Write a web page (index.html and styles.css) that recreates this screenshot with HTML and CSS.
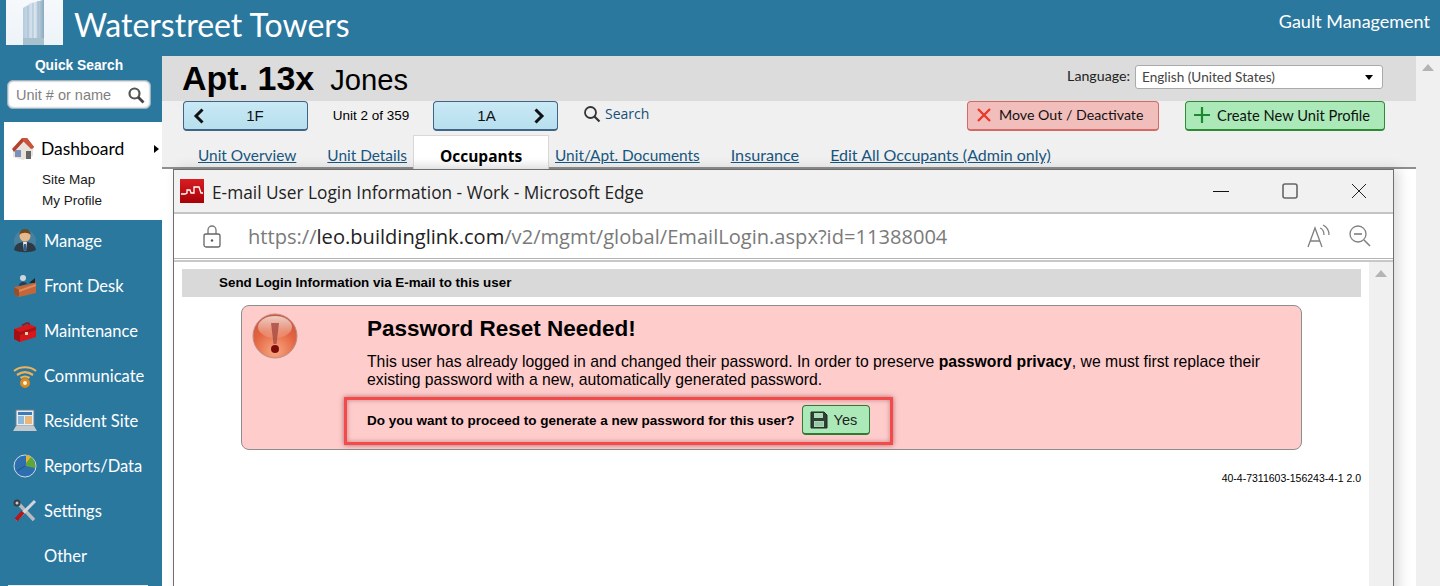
FILE: index.html
```html
<!DOCTYPE html>
<html lang="en">
<head>
<meta charset="utf-8">
<title>Waterstreet Towers</title>
<link rel="stylesheet" href="styles.css">
</head>
<body>
<div class="page">
  <header class="topbar">
    <svg class="logo" width="57" height="45" viewBox="0 0 57 45">
      <defs>
        <linearGradient id="sky" x1="0" y1="0" x2="0" y2="1"><stop offset="0" stop-color="#f6f9fc"/><stop offset="1" stop-color="#edf3f8"/></linearGradient>
        <linearGradient id="tower" x1="0" y1="0" x2="1" y2="0"><stop offset="0" stop-color="#b5cbdc"/><stop offset=".55" stop-color="#dbe7f0"/><stop offset="1" stop-color="#8aa8bf"/></linearGradient>
      </defs>
      <rect width="57" height="45" fill="url(#sky)"/>
      <path d="M17 45V8L25 3 37 0 38 0V45Z" fill="url(#tower)"/>
      <path d="M22 45V6M27 45V3M32 45V1" stroke="#9db5c8" stroke-width=".8"/>
      <rect x="17" y="38" width="21" height="7" fill="#a9c0cd"/>
    </svg>
    <h1 class="site-name">Waterstreet Towers</h1>
    <div class="company">Gault Management</div>
  </header>
  <div class="body-row">
    <nav class="sidebar">
      <div class="qs-label">Quick Search</div>
      <div class="qs-box">
        <span class="qs-placeholder">Unit # or name</span>
        <svg width="18" height="18" viewBox="0 0 18 18"><circle cx="7.500" cy="7.500" r="5" fill="none" stroke="#555" stroke-width="2.200"/><path d="M11 11l5.500 5.500" stroke="#444" stroke-width="2.800"/></svg>
      </div>
      <div class="active-panel">
        <div class="active-head">
          <svg class="nav-icon" width="24" height="24" viewBox="0 0 24 24"><path d="M2 11v9l10 3 10-4V10L12 2Z" fill="#e8e4dc"/><path d="M1 12L11 1h5l7 9-2 2-8-8L3 15Z" fill="#b5402c"/><path d="M11 1h5l7 9-3 2-8-8Z" fill="#c9543d"/><rect x="15" y="14" width="5" height="8" fill="#666"/><rect x="4" y="13" width="6" height="7" fill="#7d8fbb"/></svg>
          <span class="active-title">Dashboard</span>
          <span class="caret"></span>
        </div>
        <a class="sub-link sub-first">Site Map</a>
        <a class="sub-link">My Profile</a>
      </div>
      <ul class="nav-list">
        <li class="nav-item">
          <svg class="nav-icon" width="24" height="24" viewBox="0 0 24 24"><circle cx="12" cy="12" r="11" fill="#7f8f9b" opacity=".35"/><path d="M1 21c1-6 5-8 11-8s10 2 11 8c-5 3-17 3-22 0Z" fill="#2d3a45"/><path d="M10 13h4l-1 9h-2Z" fill="#e9e9e9"/><path d="M11 15h2l.5 6-1.500 1.500-1.500-1.500Z" fill="#2f5f8f"/><circle cx="12" cy="7" r="5.500" fill="#e7b88c"/><path d="M6.500 6c0-5 3-6 5.500-6s5.500 1 5.500 6c-2-3-9-3-11 0Z" fill="#6b4a22"/></svg>
          <span>Manage</span>
        </li>
        <li class="nav-item">
          <svg class="nav-icon" width="24" height="24" viewBox="0 0 24 24"><path d="M1 13l17-3 5-2v11L6 23 1 20Z" fill="#c0683c"/><path d="M1 13l5 3v7l-5-3Z" fill="#94502e"/><path d="M6 16l17-6v2L6 18Z" fill="#e08d5a"/><circle cx="10" cy="4" r="3" fill="#cfd6dc"/><path d="M6 12c0-5 7-5 8-2Z" fill="#2c3b47"/><path d="M16 9l6-5v5Z" fill="#24282c"/></svg>
          <span>Front Desk</span>
        </li>
        <li class="nav-item">
          <svg class="nav-icon" width="24" height="24" viewBox="0 0 24 24"><path d="M1 10l15-5 7 3v10L7 23l-6-3Z" fill="#d6181d"/><path d="M1 10l6 3v10l-6-3Z" fill="#a01015"/><path d="M7 13l16-5v3L7 16Z" fill="#a91216"/><path d="M8 6l6-3 3 1v2l-3-1-4 2Z" fill="#7c2226"/><rect x="12" y="13" width="3" height="3" fill="#e9d9a0"/></svg>
          <span>Maintenance</span>
        </li>
        <li class="nav-item">
          <svg class="nav-icon" width="24" height="24" viewBox="0 0 24 24" fill="none" stroke="#f0b157" stroke-width="2.200"><path d="M1 7c6-5 16-5 22 0"/><path d="M4 11c5-3.500 11-3.500 16 0"/><path d="M7.500 14c3-2 6-2 9 0"/><circle cx="12" cy="19" r="3.500" fill="#fff3d8" stroke="#d98a24" stroke-width="3"/></svg>
          <span>Communicate</span>
        </li>
        <li class="nav-item">
          <svg class="nav-icon" width="24" height="24" viewBox="0 0 24 24"><rect x="3" y="1" width="18" height="16" fill="#e6eef5" stroke="#6e7c88"/><rect x="5" y="3" width="14" height="3" fill="#3d7cb8"/><rect x="5" y="7" width="6" height="8" fill="#8fb9dc"/><rect x="12" y="7" width="7" height="8" fill="#e9b67b"/><path d="M3 17h18l3 5H0Z" fill="#c4c9cd"/></svg>
          <span>Resident Site</span>
        </li>
        <li class="nav-item">
          <svg class="nav-icon" width="24" height="24" viewBox="0 0 24 24"><circle cx="12" cy="12" r="11" fill="#2d6fae" stroke="#cfdbe6"/><path d="M13 1a11 11 0 0 1 9 13l-9-2Z" fill="#5fa838"/><path d="M13 1a11 11 0 0 1 5 2l-5 6Z" fill="#e8b23a"/><path d="M4 17l8-5" stroke="#1f5183"/></svg>
          <span>Reports/Data</span>
        </li>
        <li class="nav-item">
          <svg class="nav-icon" width="24" height="24" viewBox="0 0 24 24"><path d="M4 3l17 18" stroke="#b8bcc0" stroke-width="3.500"/><path d="M22 2L3 21" stroke="#d4d7da" stroke-width="3"/><path d="M10 13L3 21" stroke="#b3161b" stroke-width="4"/><circle cx="4" cy="4" r="3.500" fill="#3a3d40"/><circle cx="4" cy="4" r="1.500" fill="#c8ccd0"/></svg>
          <span>Settings</span>
        </li>
        <li class="nav-item">
          <span class="nav-blank"></span>
          <span>Other</span>
        </li>
      </ul>
      <div class="side-stub"></div>
    </nav>
    <main class="content">
      <div class="unit-head">
        <div class="unit-title"><span class="apt">Apt. 13x</span><span class="resident">Jones</span></div>
        <div class="lang">
          <span>Language:</span>
          <div class="lang-select"><span>English (United States)</span><i class="lang-arrow"></i></div>
        </div>
      </div>
      <div class="unit-tools">
        <div class="pager">
          <div class="nav-btn nav-prev">
            <svg width="14" height="18" viewBox="0 0 14 18"><path d="M10.500 2.500L4 9l6.500 6.500" fill="none" stroke="#111" stroke-width="3"/></svg>
            <span class="nav-btn-label">1F</span>
          </div>
          <span class="unit-count">Unit 2 of 359</span>
          <div class="nav-btn nav-next">
            <span class="nav-btn-label">1A</span>
            <svg width="14" height="18" viewBox="0 0 14 18"><path d="M3.500 2.500L10 9l-6.500 6.500" fill="none" stroke="#111" stroke-width="3"/></svg>
          </div>
          <a class="search-link">
            <svg width="18" height="18" viewBox="0 0 18 18"><circle cx="7.500" cy="7.500" r="5.500" fill="none" stroke="#333" stroke-width="1.800"/><path d="M11.500 11.500l5 5" stroke="#333" stroke-width="2.200"/></svg>
            <span>Search</span>
          </a>
        </div>
        <div class="actions">
          <div class="act-btn act-red">
            <svg width="16" height="16" viewBox="0 0 16 16"><path d="M2 2l12 12M14 2L2 14" stroke="#e8392a" stroke-width="2.400"/></svg>
            <span>Move Out / Deactivate</span>
          </div>
          <div class="act-btn act-green">
            <svg width="16" height="16" viewBox="0 0 16 16"><path d="M8 0v16M0 8h16" stroke="#1f8a2d" stroke-width="2.200"/></svg>
            <span>Create New Unit Profile</span>
          </div>
        </div>
      </div>
      <div class="tabs">
        <a class="tab tab-1">Unit Overview</a>
        <a class="tab tab-2">Unit Details</a>
        <a class="tab tab-on">Occupants</a>
        <a class="tab tab-3">Unit/Apt. Documents</a>
        <a class="tab tab-4">Insurance</a>
        <a class="tab tab-5">Edit All Occupants (Admin only)</a>
      </div>
    </main>
    <div class="page-scroll"><i class="arrow-up"></i></div>
  </div>
  <section class="popup">
    <div class="win-title">
      <svg class="win-favicon" width="24" height="24" viewBox="0 0 24 24"><defs><linearGradient id="fav" x1="0" y1="0" x2="0" y2="1"><stop offset="0" stop-color="#d81e22"/><stop offset="1" stop-color="#a80008"/></linearGradient></defs><rect width="24" height="24" fill="url(#fav)"/><path d="M1 15h4l2-1v-3h3l1 3h3V8h5l2 6h2" fill="none" stroke="#fff" stroke-width="1.300"/></svg>
      <span class="win-name">E-mail User Login Information - Work - Microsoft Edge</span>
      <div class="win-controls">
        <svg width="16" height="16" viewBox="0 0 16 16"><path d="M0 8.500h16" stroke="#111" stroke-width="1"/></svg>
        <svg width="16" height="16" viewBox="0 0 16 16"><rect x="1" y="1" width="14" height="14" rx="2" fill="none" stroke="#666" stroke-width="1.600"/></svg>
        <svg width="16" height="16" viewBox="0 0 16 16"><path d="M1 1l14 14M15 1L1 15" stroke="#222" stroke-width="1"/></svg>
      </div>
    </div>
    <div class="win-address">
      <svg class="lock" width="18" height="24" viewBox="0 0 18 24"><path d="M5 10V6a4 4 0 0 1 8 0v4" fill="none" stroke="#777" stroke-width="1.300"/><rect x="1" y="10" width="16" height="13" rx="2" fill="none" stroke="#666" stroke-width="1.300"/><circle cx="9" cy="16.500" r="1.200" fill="#555"/></svg>
      <span class="url"><span class="url-dim">https://</span>leo.buildinglink.com<span class="url-dim">/v2/mgmt/global/EmailLogin.aspx?id=11388004</span></span>
      <div class="addr-tools">
        <svg width="24" height="24" viewBox="0 0 24 24" fill="none" stroke="#808080" stroke-width="1.300"><path d="M1 23L8 4l7 19M3.500 17h9"/><path d="M13 4c3 1 4 4 4 7M16 1c4 2 6 6 6 10"/></svg>
        <svg width="22" height="24" viewBox="0 0 22 24" fill="none" stroke="#808080" stroke-width="1.300"><circle cx="9" cy="10" r="8"/><path d="M5 10h8" stroke-width="1.600"/><path d="M15 16l6 6" stroke-width="1.600"/></svg>
      </div>
    </div>
    <div class="win-body">
      <div class="doc">
        <div class="doc-band">Send Login Information via E-mail to this user</div>
        <div class="alert">
          <svg class="alert-icon" width="46" height="46" viewBox="0 0 46 46">
            <defs>
              <radialGradient id="orb" cx=".5" cy=".85" r=".85"><stop offset="0" stop-color="#f7a883"/><stop offset=".6" stop-color="#e4633f"/><stop offset="1" stop-color="#c8583f"/></radialGradient>
              <linearGradient id="gloss" x1="0" y1="0" x2="0" y2="1"><stop offset="0" stop-color="#fff" stop-opacity=".7"/><stop offset="1" stop-color="#fff" stop-opacity=".1"/></linearGradient>
            </defs>
            <circle cx="23" cy="23" r="22" fill="url(#orb)" stroke="#b98f86"/>
            <ellipse cx="23" cy="14" rx="17" ry="11" fill="url(#gloss)"/>
            <path d="M19 10h8l-2.500 21h-3Z" fill="#a64a42" opacity=".8"/>
            <circle cx="23" cy="36" r="4" fill="#7d0c08"/>
          </svg>
          <div class="alert-text">
            <h2 class="alert-title">Password Reset Needed!</h2>
            <p class="alert-msg">This user has already logged in and changed their password. In order to preserve <b>password privacy</b>, we must first replace their existing password with a new, automatically generated password.</p>
            <div class="prompt">
              <span>Do you want to proceed to generate a new password for this user?</span>
              <div class="yes-btn">
                <svg width="18" height="18" viewBox="0 0 18 18"><path d="M1 1h13l3 3v13H1Z" fill="#2f3f38" stroke="#1d2a25"/><rect x="4" y="2" width="9" height="5" fill="#a9dcb5"/><rect x="4" y="10" width="10" height="6" fill="#a9d8b4"/><path d="M5 12h8M5 14h8" stroke="#7fb08b" stroke-width=".8"/></svg>
                <span>Yes</span>
              </div>
            </div>
          </div>
        </div>
        <div class="version">40-4-7311603-156243-4-1 2.0</div>
      </div>
      <div class="doc-scroll"><i class="arrow-up"></i></div>
    </div>
  </section>
</div>
</body>
</html>
```
FILE: styles.css
```css
*, *::before { box-sizing: border-box; }
html, body { margin: 0; padding: 0; height: 100%; overflow: hidden; background: #fff; }
body { font-family: "Liberation Sans", Arial, sans-serif; color: #000; }
.page { position: relative; width: 1440px; height: 586px; overflow: hidden; display: flex; flex-direction: column; }

.topbar { height: 56px; background: #2b789f; color: #fff; display: flex; align-items: flex-start; padding-left: 6px; flex: none; }
.logo { display: block; flex: none; }
.site-name { margin: 4px 0 0 11px; font: 400 32px/42px "Lato", sans-serif; color: #fff; }
.company { margin: 10px 10px 0 auto; font: 400 18px/22px "Lato", sans-serif; color: #fff; }

.body-row { flex: 1; display: flex; min-height: 0; }
.sidebar { width: 162px; flex: none; background: #2b789f; color: #fff; position: relative; }
.qs-label { font-size: 13.800px; line-height: 16px; font-weight: 700; text-align: center; margin-top: 2px; padding-right: 4px; }
.qs-box { margin: 6px 0 0 7px; width: 144px; height: 29px; background: #fff; border: 1px solid #9db2bf; border-radius: 6px; box-shadow: inset 0 0 2px #888; display: flex; align-items: center; justify-content: space-between; padding: 0 5px 0 8px; }
.qs-placeholder { font-size: 14.500px; color: #7f7f7f; }
.active-panel { margin: 13px 0 0 4px; height: 98px; background: #fff; color: #000; padding: 15px 0 0 7px; }
.active-head { display: flex; align-items: center; height: 24px; }
.active-head .nav-icon { margin: 0 6px 0 0; }
.active-title { font: 400 17.500px/24px "Lato", sans-serif; }
.caret { margin-left: auto; margin-right: 3px; border-left: 5px solid #000; border-top: 4px solid transparent; border-bottom: 4px solid transparent; }
.sub-link { display: block; margin-left: 31px; font-size: 13.500px; line-height: 21px; color: #1a1a1a; }
.sub-first { margin-top: 8px; }
.nav-list { list-style: none; margin: -2px 0 0; padding: 0 0 0 13px; }
.nav-item { height: 45px; display: flex; align-items: center; gap: 7px; font: 400 16.500px/20px "Lato", sans-serif; color: #fff; }
.nav-icon { flex: none; }
.nav-blank { width: 24px; flex: none; }
.side-stub { position: absolute; left: 8px; bottom: 0; width: 140px; height: 1px; background: #e8eef2; }

.content { flex: 1; min-width: 0; position: relative; }
.unit-head { height: 45px; background: #dcdcdc; display: flex; justify-content: space-between; padding: 0 33px 0 20px; }
.unit-title { display: flex; align-items: baseline; gap: 16px; line-height: 44px; }
.apt { font-size: 34px; font-weight: 700; }
.resident { font-size: 29.200px; }
.lang { display: flex; align-items: flex-start; gap: 5px; font: 400 14.200px/22px "Lato", sans-serif; padding-top: 9px; color: #222; }
.lang-select { width: 248px; height: 24px; background: #fff; border: 1px solid #aaa; border-radius: 3px; font-size: 13.600px; line-height: 22px; color: #444; padding: 0 9px 0 6px; display: flex; align-items: center; justify-content: space-between; }
.lang-arrow { border-top: 5px solid #000; border-left: 4px solid transparent; border-right: 4px solid transparent; }

.unit-tools { height: 30px; background: #f0f0f0; display: flex; justify-content: space-between; padding: 0 31px 0 21px; }
.pager { display: flex; align-items: center; height: 30px; }
.nav-btn { width: 125px; height: 30px; background: linear-gradient(#c9e9f6, #b7dfee); border: 1px solid #3f6485; border-bottom-width: 2px; border-radius: 4px; display: flex; align-items: center; font-size: 15px; color: #111; }
.nav-prev { padding: 0 3px 0 8px; }
.nav-next { padding: 0 11px 0 7px; }
.nav-btn-label { flex: 1; text-align: center; }
.unit-count { width: 125px; text-align: center; font-size: 13.500px; padding-left: 1px; margin-top: -1px; }
.search-link { display: flex; align-items: center; gap: 4px; margin-left: 25px; font: 400 14px/18px "Open Sans", sans-serif; color: #174f78; margin-top: -4px; }
.actions { display: flex; gap: 26px; }
.act-btn { height: 30px; border-radius: 4px; display: flex; align-items: center; gap: 7px; font: 400 14.700px/18px "Lato", sans-serif; color: #111; padding: 0 0 2px 8px; }
.act-red { width: 192px; background: #f2bebb; border: 1px solid #d06b68; border-bottom-width: 2px; font-size: 14.200px; }
.act-green { width: 200px; background: #abeab8; border: 1px solid #2f8a35; border-bottom-width: 2px; }

.tabs { height: 38px; background: #f0f0f0; border-bottom: 2px solid #8f8f8f; position: relative; display: flex; align-items: flex-end; padding-left: 36px; font: 400 15.400px/20px "Lato", sans-serif; }
.tab { color: #17567f; text-decoration: underline; margin-bottom: 2px; }
.tab-2 { margin-left: 31px; }
.tab-on { width: 136px; height: 34px; margin: 0 6px -2px 6px; background: linear-gradient(#fff 70%, #f3f3f3); border: 1px solid #d8d8d8; border-bottom: 0; color: #000; text-decoration: none; font-weight: 700; text-align: center; font-family: "Open Sans", sans-serif; font-size: 15.500px; line-height: 40px; }
.tab-4 { margin-left: 31px; font-size: 16.200px; }
.tab-5 { margin-left: 31px; font-size: 16px; }

.page-scroll { width: 24px; flex: none; background: #f0f0f0; display: flex; justify-content: center; padding-top: 8px; }
.arrow-up { display: block; width: 0; height: 0; border-left: 6px solid transparent; border-right: 6px solid transparent; border-bottom: 7px solid #b4b4b4; }

.popup { position: absolute; left: 173px; top: 169px; width: 1221px; height: 430px; background: #fff; border: 1px solid #6e6e6e; box-shadow: 5px 0 12px rgba(0,0,0,.14); display: flex; flex-direction: column; }
.win-title { height: 44px; background: #f1f1f1; border-bottom: 2px solid #c4c4c4; display: flex; align-items: center; padding-left: 6px; flex: none; }
.win-name { margin: 3px 0 0 8px; font: 400 17.300px/24px "Open Sans", sans-serif; color: #222; }
.win-controls { margin-left: auto; display: flex; gap: 53px; padding-right: 26px; }
.win-address { height: 45px; background: #fff; border-bottom: 1px solid #b4b4b4; display: flex; align-items: center; padding-left: 29px; flex: none; }
.url { margin: 2px 0 0 27px; font: 400 20.100px/26px "Open Sans", sans-serif; color: #222; }
.url-dim { color: #7a7a7a; }
.addr-tools { margin-left: auto; display: flex; gap: 18px; padding-right: 22px; align-items: center; }
.win-body { flex: 1; display: flex; min-height: 0; border-top: 2px solid #c8c8c8; margin-top: 1px; }
.doc { flex: 1; min-width: 0; padding: 7px 8px 0 8px; }
.doc-band { height: 28px; background: #d9d9d9; font-size: 13.400px; font-weight: 700; line-height: 27px; padding-left: 37px; }
.doc-scroll { width: 24px; flex: none; background: #f0f0f0; display: flex; justify-content: center; padding-top: 8px; }
.alert { margin: 8px 59px 0 59px; height: 145px; background: #fcc; border: 1px solid #8d8d8d; border-radius: 8px; display: flex; padding: 7px 0 0 10px; }
.alert-icon { flex: none; display: block; }
.alert-text { margin-left: 69px; flex: 1; min-width: 0; }
.alert-title { margin: 3px 0 0; font-size: 22.500px; line-height: 26px; font-weight: 700; }
.alert-msg { margin: 11px 24px 0 0; font-size: 15.750px; line-height: 18px; }
.prompt { position: relative; display: flex; align-items: center; gap: 7px; margin: 15px 0 0 0; font-size: 13.500px; font-weight: 700; height: 32px; }
.prompt::before { content: ""; position: absolute; left: -23px; top: -7px; width: 549px; height: 48px; border: 3px solid #f44a4a; box-shadow: 0 0 5px rgba(90,0,0,.5), inset 0 0 5px rgba(90,0,0,.35); pointer-events: none; }
.yes-btn { width: 68px; height: 30px; background: #abeab8; border: 1px solid #2f7a35; border-bottom-width: 2px; border-radius: 4px; display: flex; align-items: center; gap: 6px; padding-left: 7px; font: 400 14.500px/18px "Liberation Sans", sans-serif; color: #222; }
.version { margin-top: 20px; text-align: right; font-size: 10.500px; line-height: 16px; }
```
